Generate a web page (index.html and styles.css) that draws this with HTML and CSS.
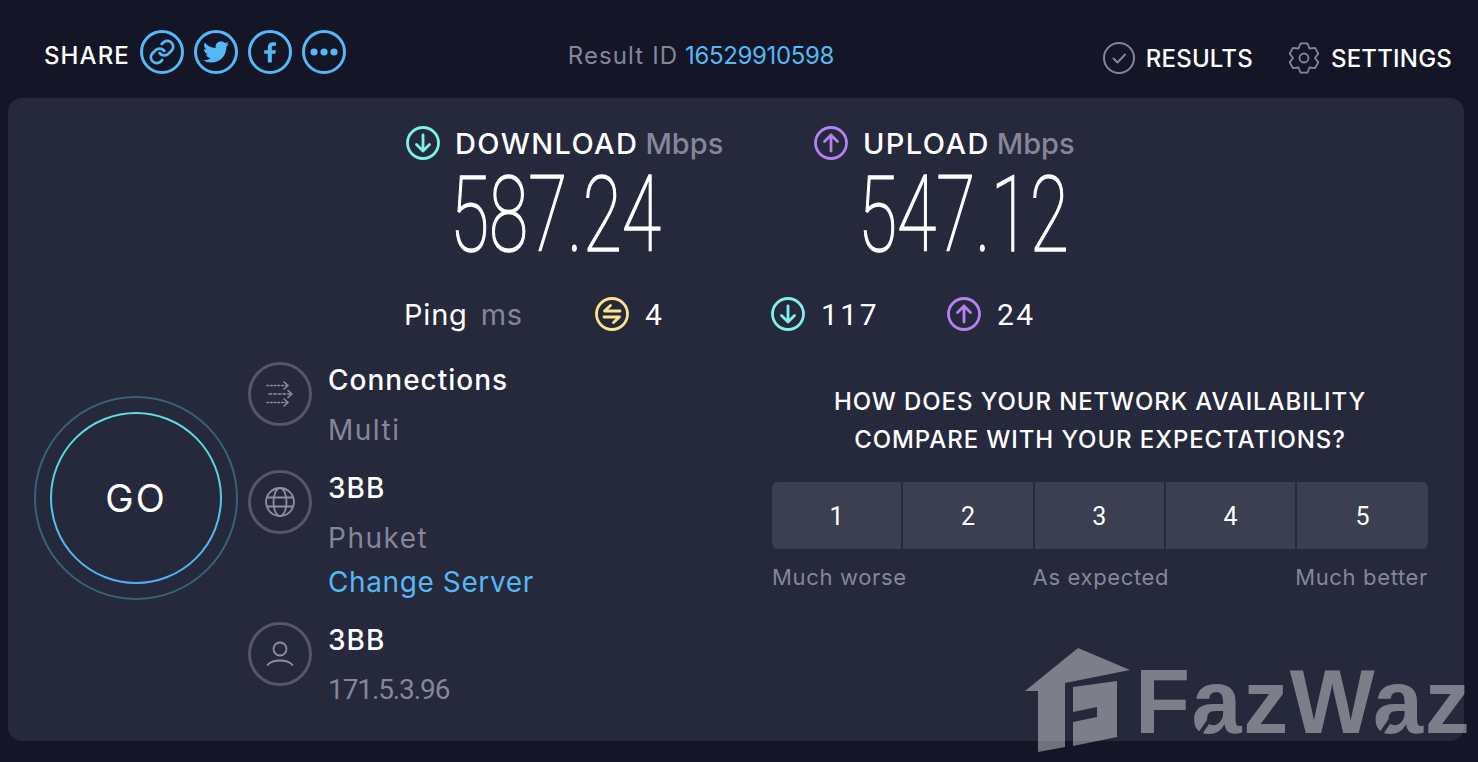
FILE: index.html
```html
<!DOCTYPE html>
<html lang="en">
<head>
    <meta charset="UTF-8">
    <meta name="viewport" content="width=device-width, initial-scale=1.0">
    <title>Speedtest Result</title>
    <link rel="stylesheet" href="styles.css">
</head>
<body>

    <header class="topbar">
        <div class="share">
            <span class="share-label">SHARE</span>
            <a class="share-btn"><svg viewBox="0 0 24 24" width="28" height="28" fill="none" stroke="#53b8f4" stroke-width="2.4" stroke-linecap="round" stroke-linejoin="round"><path d="M10 13a5 5 0 0 0 7.5.5l3-3a5 5 0 0 0-7-7l-1.7 1.7"/><path d="M14 11a5 5 0 0 0-7.5-.5l-3 3a5 5 0 0 0 7 7l1.7-1.7"/></svg></a>
            <a class="share-btn"><svg viewBox="0 0 24 24" width="26" height="26" fill="#53b8f4"><path d="M23.953 4.57a10 10 0 01-2.825.775 4.958 4.958 0 002.163-2.723c-.951.555-2.005.959-3.127 1.184a4.92 4.92 0 00-8.384 4.482C7.69 8.095 4.067 6.13 1.64 3.162a4.822 4.822 0 00-.666 2.475c0 1.71.87 3.213 2.188 4.096a4.904 4.904 0 01-2.228-.616v.06a4.923 4.923 0 003.946 4.827 4.996 4.996 0 01-2.212.085 4.936 4.936 0 004.604 3.417 9.867 9.867 0 01-6.102 2.105c-.39 0-.779-.023-1.17-.067a13.995 13.995 0 007.557 2.209c9.053 0 13.998-7.496 13.998-13.985 0-.21 0-.42-.015-.63A9.935 9.935 0 0024 4.59z"/></svg></a>
            <a class="share-btn"><svg viewBox="0 0 24 24" width="28" height="28" fill="#53b8f4"><path d="M13.6 21v-7.4h3l.5-3.100h-3.500V8.200c0-1 .3-1.600 1.700-1.600h1.900V3.800c-.3 0-1.400-.1-2.700-.1-2.700 0-4.400 1.600-4.400 4.500v2.300H7v3.100h3.100V21z"/></svg></a>
            <a class="share-btn"><svg viewBox="0 0 30 10" width="30" height="10" fill="#53b8f4"><circle cx="5" cy="5" r="3.600"/><circle cx="15" cy="5" r="3.600"/><circle cx="25" cy="5" r="3.600"/></svg></a>
        </div>
        <div class="result-id">Result ID <a>16529910598</a></div>
        <nav class="top-nav">
            <a class="nav-item"><svg viewBox="0 0 32 32" width="32" height="32" fill="none" stroke="#85869a" stroke-width="2"><circle cx="16" cy="16" r="15"/><path d="M10.500 16.500l4 4 7.500-8" stroke-linecap="round" stroke-linejoin="round"/></svg>RESULTS</a>
            <a class="nav-item"><svg viewBox="0 0 32 32" width="32" height="32" fill="none" stroke="#85869a" stroke-width="1.800" stroke-linejoin="round"><path d="M12.600 1.400H19.400L21.500 6.500 27 5.800 30.300 11.600 27 16 30.300 20.400 27 26.200 21.500 25.500 19.400 30.600H12.600L10.500 25.500 5 26.200 1.700 20.400 5 16 1.700 11.600 5 5.800 10.500 6.500z"/><circle cx="16" cy="16" r="4.500"/></svg>SETTINGS</a>
        </nav>
    </header>

    <main class="panel">
        <section class="speeds">
            <div class="speed">
                <div class="speed-head">
                    <svg class="dir-icon" viewBox="0 0 34 34" fill="none" stroke="#7cf3ea" stroke-width="2.800" stroke-linecap="round" stroke-linejoin="round"><circle cx="17" cy="17" r="15.500"/><path d="M17 9v16M10.500 18.500L17 25l6.500-6.500"/></svg>
                    <span class="speed-name">DOWNLOAD</span>
                    <span class="speed-unit">Mbps</span>
                </div>
                <div class="speed-value">587.24</div>
            </div>
            <div class="speed">
                <div class="speed-head">
                    <svg class="dir-icon" viewBox="0 0 34 34" fill="none" stroke="#b583f0" stroke-width="2.800" stroke-linecap="round" stroke-linejoin="round"><circle cx="17" cy="17" r="15.500"/><path d="M17 25V9M10.500 15.500L17 9l6.500 6.500"/></svg>
                    <span class="speed-name">UPLOAD</span>
                    <span class="speed-unit">Mbps</span>
                </div>
                <div class="speed-value">547.12</div>
            </div>
        </section>

        <section class="ping-row">
            <div class="ping-label">Ping <span class="ping-unit">ms</span></div>
            <div class="ping-item">
                <svg class="dir-icon" viewBox="0 0 34 34" fill="none" stroke="#fbe58c" stroke-width="2.800" stroke-linecap="round" stroke-linejoin="round"><circle cx="17" cy="17" r="15.500"/><path d="M25 14H9.500l6-5.500M9 20h15.500l-6 5.500"/></svg>
                <span>4</span>
            </div>
            <div class="ping-item">
                <svg class="dir-icon" viewBox="0 0 34 34" fill="none" stroke="#7cf3ea" stroke-width="2.800" stroke-linecap="round" stroke-linejoin="round"><circle cx="17" cy="17" r="15.500"/><path d="M17 9v16M10.500 18.500L17 25l6.500-6.500"/></svg>
                <span>117</span>
            </div>
            <div class="ping-item">
                <svg class="dir-icon" viewBox="0 0 34 34" fill="none" stroke="#b583f0" stroke-width="2.800" stroke-linecap="round" stroke-linejoin="round"><circle cx="17" cy="17" r="15.500"/><path d="M17 25V9M10.500 15.500L17 9l6.500 6.500"/></svg>
                <span>24</span>
            </div>
        </section>

        <section class="lower">
            <div class="go">
                <svg class="go-rings" viewBox="0 0 204 204" fill="none">
                    <defs>
                        <linearGradient id="ringGrad" x1="0" y1="0" x2="0" y2="1">
                            <stop offset="0" stop-color="#62dfe0"/>
                            <stop offset="1" stop-color="#4fb0ef"/>
                        </linearGradient>
                    </defs>
                    <circle cx="102" cy="102" r="101" stroke="#3b6078" stroke-width="2"/>
                    <circle cx="102" cy="102" r="85" stroke="url(#ringGrad)" stroke-width="2"/>
                </svg>
                <span class="go-text">GO</span>
            </div>

            <div class="info">
                <div class="info-row">
                    <div class="info-icon"><svg viewBox="0 0 32 32" width="32" height="32" fill="none" stroke="#8e8fa1" stroke-width="1.600" stroke-linecap="round" stroke-linejoin="round"><path d="M3 7.500h19" stroke-dasharray="1.500 2.200"/><path d="M20 4l4 3.500-4 3.500"/><path d="M5 16h22" stroke-dasharray="2.500 2.200"/><path d="M24 12.500l4 3.500-4 3.500"/><path d="M3 24.500h19" stroke-dasharray="1.500 2.200"/><path d="M20 21l4 3.500-4 3.500"/></svg></div>
                    <div class="info-text">
                        <div class="info-title">Connections</div>
                        <div class="info-sub">Multi</div>
                    </div>
                </div>
                <div class="info-row">
                    <div class="info-icon"><svg viewBox="0 0 32 32" width="32" height="32" fill="none" stroke="#8e8fa1" stroke-width="1.800"><circle cx="16" cy="16" r="14"/><ellipse cx="16" cy="16" rx="6.500" ry="14"/><path d="M3 11.500h26M3 20.500h26"/></svg></div>
                    <div class="info-text">
                        <div class="info-title">3BB</div>
                        <div class="info-sub">Phuket</div>
                        <a class="info-link">Change Server</a>
                    </div>
                </div>
                <div class="info-row">
                    <div class="info-icon"><svg viewBox="0 0 32 32" width="32" height="32" fill="none" stroke="#8e8fa1" stroke-width="1.800" stroke-linecap="round"><circle cx="16" cy="11" r="6.500"/><path d="M3.500 27c3-3.500 7.500-4.500 12.500-4.500s9.500 1 12.500 4.500"/></svg></div>
                    <div class="info-text">
                        <div class="info-title">3BB</div>
                        <div class="info-sub info-ip">171.5.3.96</div>
                    </div>
                </div>
            </div>

            <div class="survey">
                <h2 class="survey-title">HOW DOES YOUR NETWORK AVAILABILITY<br>COMPARE WITH YOUR EXPECTATIONS?</h2>
                <div class="scale">
                    <button class="scale-btn">1</button>
                    <button class="scale-btn">2</button>
                    <button class="scale-btn">3</button>
                    <button class="scale-btn">4</button>
                    <button class="scale-btn">5</button>
                </div>
                <div class="scale-labels">
                    <span>Much worse</span>
                    <span>As expected</span>
                    <span>Much better</span>
                </div>
            </div>
        </section>
    </main>

    <!-- watermark sits over the bottom right of the panel -->
    <div class="watermark">
        <svg class="watermark-house" viewBox="0 0 105 104" width="105" height="104"><path d="M53 0L0 43H13V104L40 99V35L105 22z M48 39L92 33V89L48 98V74L72 69V59L48 64z"/></svg>
        <span class="watermark-text">F<span class="wm-a">a</span>zW<span class="wm-a">a</span>z</span>
    </div>

</body>
</html>
```

FILE: styles.css
```css
body {
    margin: 0;
    background-color: #141526;
    color: #fff;
    font-family: Inter, "Noto Sans", sans-serif;
    height: 762px;
    overflow: hidden;
    position: relative;
}

a {
    cursor: pointer;
}

.topbar {
    height: 98px;
    box-sizing: border-box;
    padding: 6px 26px 0 44px;
    display: flex;
    justify-content: space-between;
    align-items: center;
}

.share {
    display: flex;
    align-items: center;
    gap: 10px;
    width: 302px;
}

.share-label {
    font-size: 24px;
    font-weight: 500;
    letter-spacing: 1.1px;
    margin-top: 6px;
}

.share-btn {
    width: 44px;
    height: 44px;
    box-sizing: border-box;
    border: 3px solid #53b8f4;
    border-radius: 50%;
    display: flex;
    align-items: center;
    justify-content: center;
}

.result-id {
    font-size: 24px;
    color: #85869a;
    letter-spacing: 1.1px;
    margin-top: 6px;
    margin-left: -47px;
}

.result-id a {
    color: #53b8f4;
    letter-spacing: -0.35px;
    margin-left: -1px;
}

.top-nav {
    display: flex;
    gap: 35px;
    margin-top: 12px;
}

.nav-item {
    display: flex;
    align-items: center;
    gap: 11px;
    font-size: 24px;
    font-weight: 500;
    letter-spacing: 0.2px;
}

.panel {
    position: relative;
    margin: 0 14px 0 8px;
    height: 643px;
    box-sizing: border-box;
    padding-top: 28px;
    background-color: #26283b;
    border-radius: 14px;
}

.speeds {
    display: flex;
    padding-left: 398px;
}

.speed {
    width: 408px;
}

.speed-head {
    display: flex;
    align-items: center;
    height: 34px;
}

.dir-icon {
    width: 34px;
    height: 34px;
    flex-shrink: 0;
}

.speed-name {
    font-size: 29px;
    font-weight: 500;
    margin-left: 15px;
    letter-spacing: 1.4px;
}

.speed-unit {
    font-size: 29px;
    font-weight: 500;
    margin-left: 7px;
    color: #85869a;
}

.speed-value {
    font-family: Roboto, sans-serif;
    font-weight: 100;
    -webkit-text-stroke: 1.6px #fff;
    font-size: 106px;
    line-height: 110px;
    height: 137px;
    margin-left: 44px;
    transform: scaleX(0.674);
    transform-origin: left top;
    white-space: nowrap;
}

.ping-row {
    display: flex;
    align-items: center;
    height: 34px;
    padding-left: 396px;
    font-family: Roboto, sans-serif;
}

.ping-label {
    width: 191px;
    font-family: Inter, sans-serif;
    font-size: 29px;
    letter-spacing: 0.8px;
}

.ping-unit {
    color: #85869a;
    margin-left: 4px;
}

.ping-item {
    width: 176px;
    display: flex;
    align-items: center;
    gap: 16px;
    font-size: 30px;
    letter-spacing: 2.500px;
}

.lower {
    display: flex;
    margin-top: 31px;
}

.go {
    position: relative;
    width: 204px;
    height: 204px;
    margin: 34px 10px 0 26px;
    display: flex;
    align-items: center;
    justify-content: center;
}

.go-rings {
    position: absolute;
    inset: 0;
}

.go-text {
    font-size: 38px;
    font-weight: 400;
    letter-spacing: 2px;
}

.info {
    width: 524px;
    display: flex;
    flex-direction: column;
    gap: 22px;
}

.info-row {
    display: flex;
    gap: 16px;
}

.info-icon {
    width: 64px;
    height: 64px;
    box-sizing: border-box;
    border: 3px solid #55566a;
    border-radius: 50%;
    display: flex;
    align-items: center;
    justify-content: center;
    flex-shrink: 0;
}

.info-title {
    font-size: 28px;
    font-weight: 500;
    line-height: 36px;
    letter-spacing: 1px;
}

.info-sub {
    font-size: 28px;
    line-height: 36px;
    color: #85869a;
    letter-spacing: 1.500px;
    margin-top: 14px;
}

.info-ip {
    font-family: Roboto, sans-serif;
    letter-spacing: -1.100px;
}

.info-link {
    display: block;
    font-size: 28px;
    line-height: 36px;
    color: #53b8f4;
    letter-spacing: 0.6px;
    margin-top: 8px;
}

.survey {
    width: 656px;
    padding-top: 21px;
}

.survey-title {
    margin: 0;
    font-size: 24px;
    font-weight: 500;
    line-height: 38px;
    text-align: center;
    letter-spacing: 0.9px;
}

.scale {
    display: flex;
    gap: 2px;
    margin-top: 23px;
    height: 67px;
    border-radius: 6px;
    overflow: hidden;
}

.scale-btn {
    flex: 0 0 129.3px;
    border: none;
    padding: 2px 0 0;
    background-color: #3c3e52;
    color: #fff;
    font-family: Roboto, sans-serif;
    font-size: 25px;
}

.scale-btn:last-child {
    flex: 1;
}

.scale-labels {
    display: flex;
    justify-content: space-between;
    margin-top: 13px;
    font-size: 22px;
    line-height: 30px;
    letter-spacing: 0.65px;
    color: #85869a;
}

.watermark {
    position: absolute;
    left: 1025px;
    top: 648px;
    fill: rgba(255, 255, 255, 0.4);
}

.watermark-house {
    display: block;
}

.watermark-text {
    position: absolute;
    left: 110px;
    top: 9px;
    font-family: "Liberation Sans", sans-serif;
    font-weight: 700;
    font-size: 90px;
    line-height: 90px;
    letter-spacing: 1.600px;
    color: rgba(255, 255, 255, 0.4);
}

.wm-a {
    position: relative;
}

.wm-a::after {
    content: "";
    position: absolute;
    left: 12px;
    top: 58px;
    width: 4px;
    height: 30px;
    background-color: #26283b;
    transform: rotate(35deg);
}
```
